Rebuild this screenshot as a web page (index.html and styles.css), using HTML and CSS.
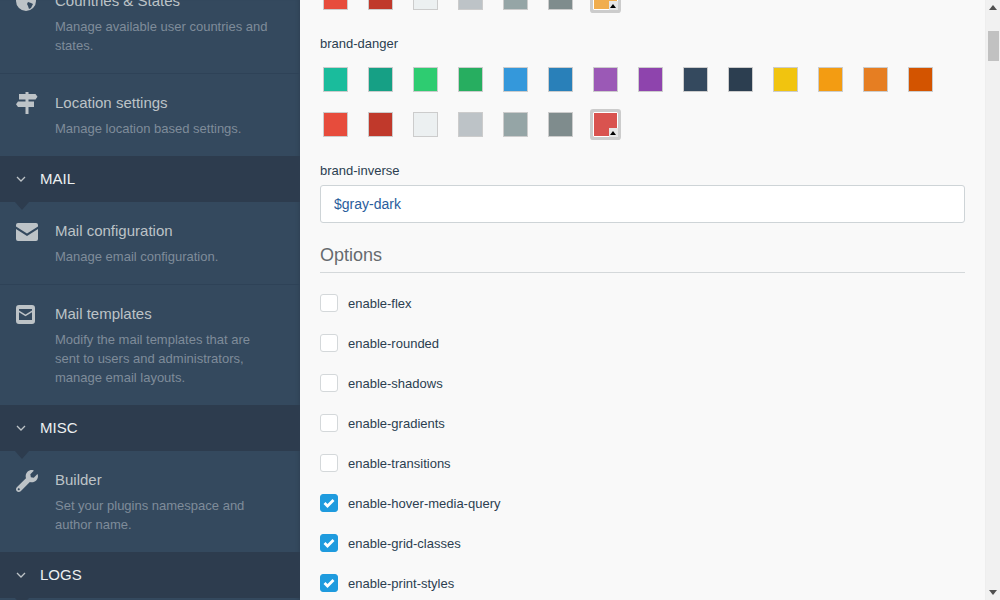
FILE: index.html
```html
<!DOCTYPE html>
<html lang="en">

<head>
    <meta charset="UTF-8">
    <meta name="viewport" content="width=device-width, initial-scale=1.0">
    <title>Settings</title>
    <link rel="stylesheet" href="styles.css">
</head>

<body>
    <div class="layout">
        <aside class="sidebar">
            <div class="side-scroll">
                <a class="side-item has-line">
                    <svg class="side-icon" viewBox="0 0 22 22"><path d="M10 0a10 10 0 1 0 0 20 10 10 0 0 0 0-20zM6 4l3 1 1 2-2 2-3-1-2 0 1-3zm6 7l3 1 2 1-2 4-2 1-1-3-1-2z" fill-rule="evenodd"/></svg>
                    <div class="side-text">
                        <div class="side-title">Countries &amp; States</div>
                        <div class="side-desc">Manage available user countries and states.</div>
                    </div>
                </a>
                <a class="side-item">
                    <svg class="side-icon" viewBox="0 0 22 22"><path d="M9.500-1h3v2H19.500L21.500 3.700 19.500 6.500h-7V8.500H18V14H12.500v7h-3V14H2L0 11.200 2 8.500H9.500v-2H3V1H9.500z"/></svg>
                    <div class="side-text">
                        <div class="side-title">Location settings</div>
                        <div class="side-desc">Manage location based settings.</div>
                    </div>
                </a>
                <div class="side-head">
                    <svg class="chev" width="10" height="6" viewBox="0 0 10 6"><path d="M1 1l4 4 4-4"/></svg>
                    <span>MAIL</span>
                </div>
                <a class="side-item has-line">
                    <svg class="side-icon" viewBox="0 0 22 22"><path d="M2 2h18a2 2 0 0 1 2 2v1.500L11 12.500 0 5.500V4a2 2 0 0 1 2-2zM0 8l11 7 11-7v10a2 2 0 0 1-2 2H2a2 2 0 0 1-2-2z"/></svg>
                    <div class="side-text">
                        <div class="side-title">Mail configuration</div>
                        <div class="side-desc">Manage email configuration.</div>
                    </div>
                </a>
                <a class="side-item">
                    <svg class="side-icon" viewBox="0 0 22 22"><path fill-rule="evenodd" d="M3 1h13a3 3 0 0 1 3 3v13a3 3 0 0 1-3 3H3a3 3 0 0 1-3-3V4a3 3 0 0 1 3-3zM3 5v11h13V5zM3 6.500l6.500 4 6.500-4v1.800l-6.500 4-6.500-4z"/></svg>
                    <div class="side-text">
                        <div class="side-title">Mail templates</div>
                        <div class="side-desc">Modify the mail templates that are sent to users and administrators, manage email layouts.</div>
                    </div>
                </a>
                <div class="side-head">
                    <svg class="chev" width="10" height="6" viewBox="0 0 10 6"><path d="M1 1l4 4 4-4"/></svg>
                    <span>MISC</span>
                </div>
                <a class="side-item">
                    <svg class="side-icon" viewBox="0 0 512 512"><path d="M507.730 109.100c-2.240-9.030-13.540-12.090-20.120-5.510l-74.360 74.360-67.880-11.310-11.310-67.880 74.360-74.360c6.620-6.620 3.430-17.900-5.660-20.160-47.380-11.740-99.550.91-136.580 37.930-39.640 39.640-50.550 97.100-34.050 147.200L18.740 402.760c-24.990 24.990-24.990 65.510 0 90.500 24.990 24.990 65.510 24.990 90.500 0l213.210-213.210c50.120 16.710 107.470 5.680 147.370-34.220 37.070-37.070 49.700-89.320 37.910-136.730zM64 472c-13.250 0-24-10.750-24-24 0-13.260 10.750-24 24-24s24 10.740 24 24c0 13.250-10.750 24-24 24z"/></svg>
                    <div class="side-text">
                        <div class="side-title">Builder</div>
                        <div class="side-desc">Set your plugins namespace and author name.</div>
                    </div>
                </a>
                <div class="side-head">
                    <svg class="chev" width="10" height="6" viewBox="0 0 10 6"><path d="M1 1l4 4 4-4"/></svg>
                    <span>LOGS</span>
                </div>
            </div>
        </aside>

        <main class="main">
            <div class="main-scroll">
                <div class="swatches" id="first-swatches"></div>
                <label class="field-label">brand-danger</label>
                <div class="swatches" id="danger-swatches"></div>
                <label class="field-label">brand-inverse</label>
                <input class="text-input" type="text" value="$gray-dark">
                <h4 class="section-title">Options</h4>
                <ul class="options">
                    <li><span class="check"></span>enable-flex</li>
                    <li><span class="check"></span>enable-rounded</li>
                    <li><span class="check"></span>enable-shadows</li>
                    <li><span class="check"></span>enable-gradients</li>
                    <li><span class="check"></span>enable-transitions</li>
                    <li><span class="check on"><svg width="12" height="10" viewBox="0 0 12 10"><path d="M1.500 5l3 3 6-6"/></svg></span>enable-hover-media-query</li>
                    <li><span class="check on"><svg width="12" height="10" viewBox="0 0 12 10"><path d="M1.500 5l3 3 6-6"/></svg></span>enable-grid-classes</li>
                    <li><span class="check on"><svg width="12" height="10" viewBox="0 0 12 10"><path d="M1.500 5l3 3 6-6"/></svg></span>enable-print-styles</li>
                </ul>
            </div>
        </main>

        <div class="scrollbar">
            <span class="arrow-up"></span>
            <span class="thumb"></span>
            <span class="arrow-down"></span>
        </div>
    </div>

    <script>
        const topRow = ['#1abc9c', '#16a085', '#2ecc71', '#27ae60', '#3498db', '#2980b9', '#9b59b6', '#8e44ad', '#34495e', '#2c3e50', '#f1c40f', '#f39c12', '#e67e22', '#d35400'];
        const bottomRow = ['#e74c3c', '#c0392b', '#ecf0f1', '#bdc3c7', '#95a5a6', '#7f8c8d'];

        function addSwatches(id, selected) {
            const box = document.getElementById(id);
            topRow.concat(bottomRow).forEach(color => {
                const swatch = document.createElement('span');
                swatch.className = 'swatch';
                swatch.style.background = color;
                box.appendChild(swatch);
            });
            const custom = document.createElement('span');
            custom.className = 'swatch selected';
            custom.style.background = selected;
            box.appendChild(custom);
        }

        addSwatches('first-swatches', '#f0ad4e');
        addSwatches('danger-swatches', '#d9534f');
    </script>
</body>

</html>
```

FILE: styles.css
```css
* {
    box-sizing: border-box;
}

body {
    margin: 0;
    font-family: "Liberation Sans", Arial, sans-serif;
    color: #2b3e50;
    background: #f9f9f9;
    overflow: hidden;
}

.layout {
    display: flex;
    height: 600px;
    overflow: hidden;
}

/* sidebar */
.sidebar {
    width: 300px;
    flex: none;
    overflow: hidden;
    background: #34495e;
    box-shadow: inset -4px 0 4px -3px rgba(0, 0, 0, 0.12);
}

.side-scroll {
    margin-top: -28px;
}

.side-item {
    display: flex;
    padding: 19px 30px 18px 16px;
    color: #bdc3c7;
}

.side-item.has-line {
    border-bottom: 1px solid #2e4257;
}

.side-icon {
    flex: none;
    width: 22px;
    height: 22px;
    margin-right: 17px;
    fill: #bdc3c7;
    overflow: visible;
}

.side-title {
    font-size: 15px;
    line-height: 20px;
}

.side-desc {
    margin-top: 6px;
    font-size: 13px;
    line-height: 19px;
    color: #7f8c9a;
}

.side-head {
    position: relative;
    display: flex;
    align-items: center;
    height: 46px;
    padding-left: 16px;
    background: #2d3c4e;
    color: #ecf0f1;
    font-size: 15px;
}

.side-head span {
    margin-bottom: 2px;
}

.side-head::after {
    content: "";
    position: absolute;
    left: 15px;
    top: 100%;
    border-left: 7px solid transparent;
    border-right: 7px solid transparent;
    border-top: 8px solid #2d3c4e;
}

.chev {
    margin-right: 14px;
    fill: none;
    stroke: #bdc3c7;
    stroke-width: 1.300;
}

/* main column */
.main {
    flex: 1;
    min-width: 0;
    overflow: hidden;
    background: #f9f9f9;
    padding: 0 20px;
}

.main-scroll {
    margin-top: -60px;
}

.swatches {
    display: flex;
    flex-wrap: wrap;
    gap: 20px;
    padding-left: 3px;
}

.swatch {
    width: 25px;
    height: 25px;
    border: 1px solid #cccccc;
}

.swatch.selected {
    position: relative;
    border-color: #ffffff;
    box-shadow: 0 0 0 3px #cccccc;
    border-radius: 1px;
}

.swatch.selected::after {
    content: "";
    position: absolute;
    right: -1px;
    bottom: -1px;
    width: 9px;
    height: 9px;
    background: #e6e6e6;
}

.swatch.selected::before {
    content: "";
    position: absolute;
    z-index: 1;
    right: 1px;
    bottom: 1px;
    border-left: 3px solid transparent;
    border-right: 3px solid transparent;
    border-bottom: 4px solid #000000;
}

.field-label {
    display: block;
    font-size: 13px;
    line-height: 18px;
    margin: 25px 0 14px;
}

.field-label + .text-input {
    margin-top: -9px;
}

.text-input {
    display: block;
    width: 100%;
    height: 38px;
    padding: 0 13px;
    border: 1px solid #ced4d7;
    border-radius: 3px;
    background: #ffffff;
    color: #2a5d9c;
    font-family: inherit;
    font-size: 14px;
}

.section-title {
    margin: 21px 0 0;
    padding-bottom: 6px;
    font-size: 18px;
    line-height: 22px;
    font-weight: 400;
    color: #666a6e;
    border-bottom: 1px solid #d4d8da;
}

.options {
    list-style: none;
    margin: 10px 0 0;
    padding: 0;
}

.options li {
    display: flex;
    align-items: center;
    height: 40px;
    font-size: 13px;
}

.check {
    display: flex;
    align-items: center;
    justify-content: center;
    width: 18px;
    height: 18px;
    margin-right: 10px;
    border: 1px solid #d4d8da;
    border-radius: 3px;
    background: #ffffff;
}

.check.on {
    border-color: #1f9bde;
    background: #1f9bde;
}

.check svg {
    fill: none;
    stroke: #ffffff;
    stroke-width: 2.800;
}

/* fake scrollbar, the page is frozen at a scroll offset */
.scrollbar {
    flex: none;
    width: 15px;
    display: flex;
    flex-direction: column;
    align-items: center;
    background: #f1f1f1;
    border-left: 1px solid #eeeeee;
}

.arrow-up {
    margin-top: 5px;
    border-left: 4px solid transparent;
    border-right: 4px solid transparent;
    border-bottom: 5px solid #505050;
}

.thumb {
    width: 11px;
    height: 30px;
    margin-top: 21px;
    background: #c1c1c1;
}

.arrow-down {
    margin-top: auto;
    margin-bottom: 5px;
    border-left: 4px solid transparent;
    border-right: 4px solid transparent;
    border-top: 5px solid #505050;
}
```
